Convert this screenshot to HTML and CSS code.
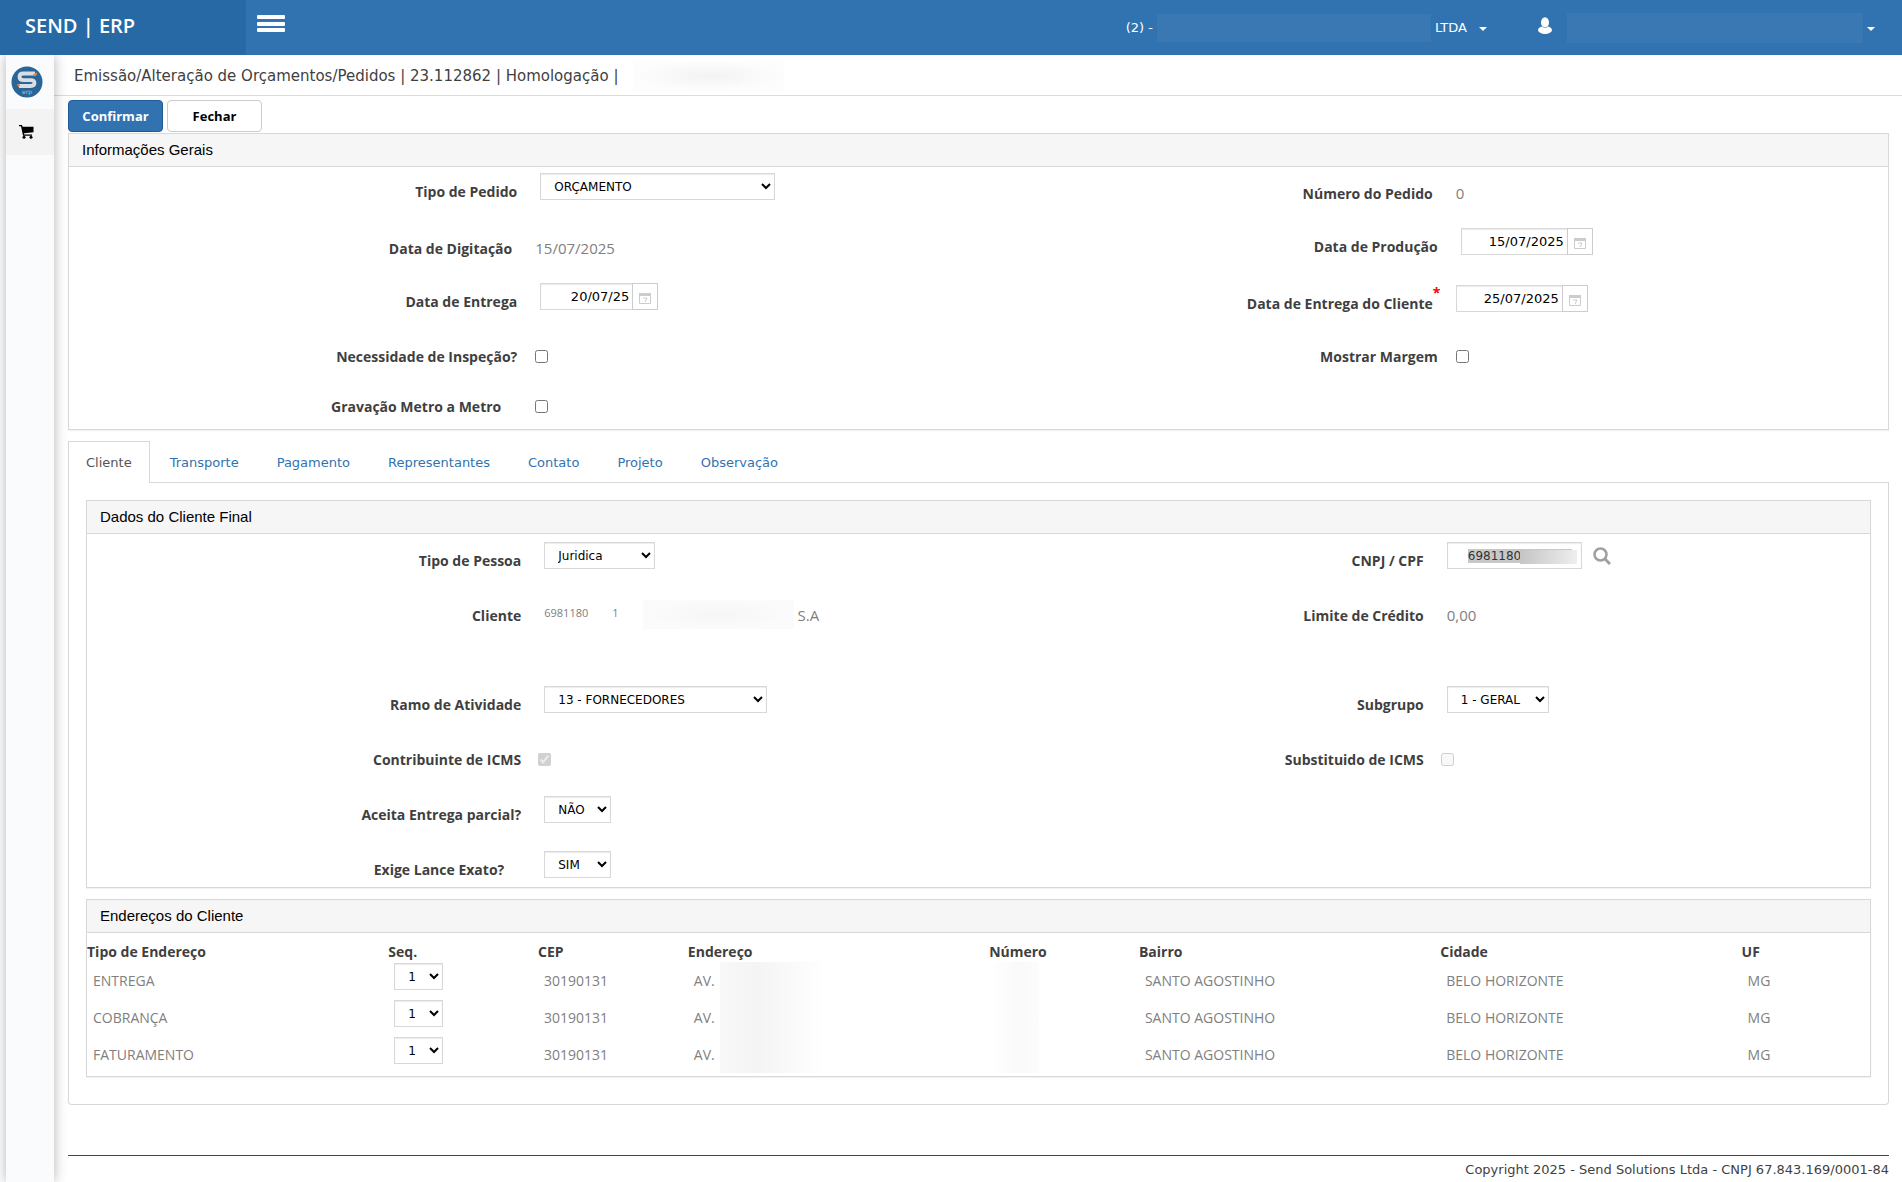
FILE: index.html
```html
<!DOCTYPE html>
<html lang="pt-BR">
<head>
  <meta charset="UTF-8">
  <meta name="viewport" content="width=device-width, initial-scale=1.0">
  <title>SEND | ERP</title>
  <link rel="stylesheet" href="styles.css">
</head>
<body>
  <header class="topbar">
    <a href="#" class="brand">SEND | ERP</a>
    <button type="button" class="menu-toggle" aria-label="Menu">
      <svg width="28" height="18" viewBox="0 0 28 18" fill="#fff">
        <rect width="28" height="4" rx="1"/>
        <rect y="7" width="28" height="4" rx="1"/>
        <rect y="13" width="28" height="4" rx="1"/>
      </svg>
    </button>
    <nav class="top-menu">
      <a href="#" class="top-link">(2) - <span class="masked masked-company"></span>LTDA <span class="caret"></span></a>
      <a href="#" class="top-link user-link" aria-label="Usuário">
        <svg width="16" height="18" viewBox="0 0 16 18" fill="#fff">
          <ellipse cx="8" cy="5.5" rx="4" ry="5.2"/>
          <ellipse cx="8" cy="13" rx="7" ry="4"/>
          <path d="M5 9.500q3 2.500 6 0" fill="none" stroke="#8fb3d4"/>
        </svg>
        <span class="masked masked-user"></span><span class="caret"></span>
      </a>
    </nav>
  </header>

  <div class="layout">
    <aside class="sidebar">
      <a href="#" class="side-logo" aria-label="Send ERP">
        <svg width="32" height="32" viewBox="0 0 32 32">
          <circle cx="16" cy="16" r="15.500" fill="#2a6598"/>
          <path d="M24 7.500H12.500Q8.500 7.500 8.500 10.800t4 3.300h7Q23.500 14.100 23.500 17t-4 3H8" fill="none" stroke="#d9dee5" stroke-width="3.800" stroke-linejoin="round"/>
          <path d="M22.500 8.500l3-1.500-.5 2.500zM6.500 18.500l2.500.5-1.500 1.500z" fill="#f08538" stroke="#f08538"/>
          <text x="16" y="27.500" class="logo-text">erp</text>
        </svg>
      </a>
      <a href="#" class="side-item" aria-label="Pedidos">
        <svg width="15" height="14" viewBox="0 0 15 14">
          <path d="M0 0h3l.6 1.800H14.500v5.400L5 8.300l.3 1.200H13v1.300H4L2 1.300H0z"/>
          <circle cx="5" cy="12.200" r="1.500"/>
          <circle cx="12" cy="12.200" r="1.500"/>
        </svg>
      </a>
    </aside>

    <main class="content">
      <h1 class="page-title">Emissão/Alteração de Orçamentos/Pedidos | 23.112862 | Homologação | <span class="masked masked-title"></span></h1>

      <form class="page-body">
        <div class="actions">
          <button type="button" class="btn btn-primary">Confirmar</button>
          <button type="button" class="btn">Fechar</button>
        </div>

        <section class="panel">
          <h2 class="panel-heading">Informações Gerais</h2>
          <div class="fields fields-general">
            <div class="field">
              <label for="tipo-pedido">Tipo de Pedido</label>
              <div class="control"><select id="tipo-pedido" class="input w-type"><option>ORÇAMENTO</option></select></div>
            </div>
            <div class="field field-tight">
              <span class="label">Número do Pedido</span>
              <div class="control"><span class="value">0</span></div>
            </div>

            <div class="field field-tight">
              <span class="label">Data de Digitação</span>
              <div class="control"><span class="value">15/07/2025</span></div>
            </div>
            <div class="field">
              <label for="data-producao">Data de Produção</label>
              <div class="control">
                <input id="data-producao" type="text" class="input date-input" value="15/07/2025">
                <button type="button" class="date-btn" aria-label="Calendário"><svg width="12" height="12" viewBox="0 0 12 12"><path d="M.5 2.500h11v9H.5z" fill="#fff" stroke="#ccc"/><path d="M0 1h12v3H0z" fill="#ccc"/><path d="M4 6h4L6 10" fill="none" stroke="#ccc"/></svg></button>
              </div>
            </div>

            <div class="field">
              <label for="data-entrega">Data de Entrega</label>
              <div class="control">
                <input id="data-entrega" type="text" class="input date-input date-short" value="20/07/25">
                <button type="button" class="date-btn" aria-label="Calendário"><svg width="12" height="12" viewBox="0 0 12 12"><path d="M.5 2.500h11v9H.5z" fill="#fff" stroke="#ccc"/><path d="M0 1h12v3H0z" fill="#ccc"/><path d="M4 6h4L6 10" fill="none" stroke="#ccc"/></svg></button>
              </div>
            </div>
            <div class="field field-tight">
              <label for="data-cliente">Data de Entrega do Cliente<span class="required">*</span></label>
              <div class="control">
                <input id="data-cliente" type="text" class="input date-input" value="25/07/2025">
                <button type="button" class="date-btn" aria-label="Calendário"><svg width="12" height="12" viewBox="0 0 12 12"><path d="M.5 2.500h11v9H.5z" fill="#fff" stroke="#ccc"/><path d="M0 1h12v3H0z" fill="#ccc"/><path d="M4 6h4L6 10" fill="none" stroke="#ccc"/></svg></button>
              </div>
            </div>

            <div class="field field-check">
              <label for="inspecao">Necessidade de Inspeção?</label>
              <div class="control"><input id="inspecao" type="checkbox"></div>
            </div>
            <div class="field field-check">
              <label for="margem">Mostrar Margem</label>
              <div class="control"><input id="margem" type="checkbox"></div>
            </div>

            <div class="field field-check field-short">
              <label for="gravacao">Gravação Metro a Metro</label>
              <div class="control"><input id="gravacao" type="checkbox"></div>
            </div>
          </div>
        </section>

        <nav class="tabs">
          <a href="#" class="tab active">Cliente</a>
          <a href="#" class="tab">Transporte</a>
          <a href="#" class="tab">Pagamento</a>
          <a href="#" class="tab">Representantes</a>
          <a href="#" class="tab">Contato</a>
          <a href="#" class="tab">Projeto</a>
          <a href="#" class="tab">Observação</a>
        </nav>

        <div class="tab-pane">
          <section class="panel">
            <h2 class="panel-heading">Dados do Cliente Final</h2>
            <div class="fields fields-client">
              <div class="field">
                <label for="tipo-pessoa">Tipo de Pessoa</label>
                <div class="control"><select id="tipo-pessoa" class="input w-person"><option>Juridica</option></select></div>
              </div>
              <div class="field">
                <label for="cnpj">CNPJ / CPF</label>
                <div class="control">
                  <span class="masked-input">
                    <input id="cnpj" type="text" class="input w-cnpj" value="6981180">
                    <span class="cnpj-mask"></span>
                  </span>
                  <button type="button" class="search-btn" aria-label="Pesquisar"><svg width="18" height="18" viewBox="0 0 18 18" fill="none" stroke="#a19fa3" stroke-width="2.500"><circle cx="7.500" cy="7.500" r="6"/><path d="M12 12l5 5" stroke-width="3"/></svg></button>
                </div>
              </div>

              <div class="field">
                <span class="label">Cliente</span>
                <div class="control">
                  <span class="code">6981180</span>
                  <span class="code">1</span>
                  <span class="masked masked-client"></span>
                  <span class="value">S.A</span>
                </div>
              </div>
              <div class="field">
                <span class="label">Limite de Crédito</span>
                <div class="control"><span class="value">0,00</span></div>
              </div>

              <div class="field">
                <label for="ramo">Ramo de Atividade</label>
                <div class="control"><select id="ramo" class="input w-branch"><option>13 - FORNECEDORES</option></select></div>
              </div>
              <div class="field">
                <label for="subgrupo">Subgrupo</label>
                <div class="control"><select id="subgrupo" class="input w-group"><option>1 - GERAL</option></select></div>
              </div>

              <div class="field field-check">
                <label for="contribuinte">Contribuinte de ICMS</label>
                <div class="control"><input id="contribuinte" type="checkbox" checked disabled></div>
              </div>
              <div class="field field-check">
                <label for="substituido">Substituido de ICMS</label>
                <div class="control"><input id="substituido" type="checkbox" disabled></div>
              </div>

              <div class="field field-left">
                <label for="parcial">Aceita Entrega parcial?</label>
                <div class="control"><select id="parcial" class="input w-flag"><option>NÃO</option><option>SIM</option></select></div>
              </div>

              <div class="field field-left field-short">
                <label for="lance">Exige Lance Exato?</label>
                <div class="control"><select id="lance" class="input w-flag"><option>SIM</option><option>NÃO</option></select></div>
              </div>
            </div>
          </section>

          <section class="panel">
            <h2 class="panel-heading">Endereços do Cliente</h2>
            <div class="address-wrap">
              <table class="addresses">
                <thead>
                  <tr>
                    <th class="col-wide">Tipo de Endereço</th>
                    <th class="col-narrow">Seq.</th>
                    <th class="col-narrow">CEP</th>
                    <th class="col-wide">Endereço</th>
                    <th class="col-narrow">Número</th>
                    <th class="col-wide">Bairro</th>
                    <th class="col-wide">Cidade</th>
                    <th>UF</th>
                  </tr>
                </thead>
                <tbody>
                  <tr>
                    <td>ENTREGA</td>
                    <td><select class="input w-seq" aria-label="Seq. entrega"><option>1</option></select></td>
                    <td>30190131</td>
                    <td class="masked-street">AV.</td>
                    <td class="masked-number"></td>
                    <td>SANTO AGOSTINHO</td>
                    <td>BELO HORIZONTE</td>
                    <td>MG</td>
                  </tr>
                  <tr>
                    <td>COBRANÇA</td>
                    <td><select class="input w-seq" aria-label="Seq. cobrança"><option>1</option></select></td>
                    <td>30190131</td>
                    <td class="masked-street">AV.</td>
                    <td class="masked-number"></td>
                    <td>SANTO AGOSTINHO</td>
                    <td>BELO HORIZONTE</td>
                    <td>MG</td>
                  </tr>
                  <tr>
                    <td>FATURAMENTO</td>
                    <td><select class="input w-seq" aria-label="Seq. faturamento"><option>1</option></select></td>
                    <td>30190131</td>
                    <td class="masked-street">AV.</td>
                    <td class="masked-number"></td>
                    <td>SANTO AGOSTINHO</td>
                    <td>BELO HORIZONTE</td>
                    <td>MG</td>
                  </tr>
                </tbody>
              </table>
            </div>
          </section>
        </div>
      </form>

      <footer class="footer">Copyright 2025 - Send Solutions Ltda - CNPJ 67.843.169/0001-84</footer>
    </main>
  </div>

</body>
</html>
```
FILE: styles.css
```css
:root {
  --primary: #3173b0;
  --primary-dark: #2769a5;
  --border: #d8d8d8;
  --text: #3f3f3f;
  --muted: #808080;
  --label-font: "Open Sans", "Noto Sans", sans-serif;
  --ui-font: Verdana, "DejaVu Sans", sans-serif;
}

* {
  box-sizing: border-box;
}

body {
  margin: 0;
  min-height: 100vh;
  display: flex;
  flex-direction: column;
  background: #fff;
  color: var(--text);
  font-family: var(--ui-font);
  font-size: 13px;
}

a {
  color: var(--primary);
  text-decoration: none;
}

button {
  cursor: pointer;
}

/* Topbar */
.topbar {
  display: flex;
  height: 55px;
  background: var(--primary);
}

.brand {
  width: 246px;
  padding-left: 25px;
  background: var(--primary-dark);
  color: #fff;
  font-family: var(--label-font);
  font-size: 20px;
  font-weight: 600;
  line-height: 51px;
}

.menu-toggle {
  align-self: flex-start;
  margin: 15px 0 0 11px;
  padding: 0;
  border: 0;
  background: none;
}

.menu-toggle svg {
  display: block;
}

.top-menu {
  display: flex;
  gap: 50px;
  margin-left: auto;
  padding-right: 27px;
}

.top-link {
  display: flex;
  align-items: center;
  gap: 4px;
  color: #fff;
}

.user-link svg {
  margin: 0 10px 4px 0;
}

.caret {
  margin: 2px 0 0 8px;
  border: 4px solid transparent;
  border-top-color: #fff;
  border-bottom: 0;
}

.masked {
  display: inline-block;
  background: #f9f9f9;
}

.masked-company {
  width: 274px;
  height: 28px;
  background: #3a78b3;
}

.masked-user {
  width: 296px;
  height: 30px;
  background: #3a78b3;
}

.user-link .caret {
  margin-left: 0;
}

/* Layout */
.layout {
  flex: 1;
  display: flex;
}

.sidebar {
  width: 48px;
  margin-left: 6px;
  background: #f9fbfd;
  box-shadow: 0 0 12px rgba(0, 0, 0, 0.3);
  clip-path: inset(0 -14px 0 -6px);
}

.side-logo,
.side-item {
  display: flex;
  align-items: center;
  justify-content: center;
}

.side-logo {
  height: 54px;
  padding-right: 6px;
}

.logo-text {
  fill: #a9c0d6;
  font-size: 6px;
  text-anchor: middle;
}

.side-item {
  height: 46px;
  padding-right: 8px;
  background: #f3f3f3;
}

.content {
  flex: 1;
  min-width: 0;
  display: flex;
  flex-direction: column;
}

.page-title {
  display: flex;
  align-items: center;
  gap: 16px;
  height: 41px;
  margin: 0;
  padding: 2px 0 0 20px;
  border-bottom: 1px solid #dcdcdc;
  font-size: 15px;
  font-weight: normal;
}

.masked-title {
  width: 150px;
  height: 30px;
  background: radial-gradient(closest-side, #f3f3f3, #fdfdfd);
}

.page-body {
  padding: 4px 13px 0 14px;
}

.actions {
  display: flex;
  gap: 4px;
}

.btn {
  width: 95px;
  height: 32px;
  margin-bottom: 1px;
  border: 1px solid #ccc;
  border-radius: 4px;
  background: #fff;
  color: #000;
  font-family: var(--label-font);
  font-size: 13px;
  font-weight: bold;
}

.btn-primary {
  border-color: #1f5c96;
  background: var(--primary);
  color: #fff;
}

/* Panels */
.panel {
  border: 1px solid var(--border);
  box-shadow: 0 1px 1px rgba(0, 0, 0, 0.05);
}

.panel + .panel {
  margin-top: 11px;
}

.panel-heading {
  height: 33px;
  margin: 0;
  padding-left: 13px;
  border-bottom: 1px solid var(--border);
  background: #f6f6f6;
  color: #000;
  font: 15px/32px "Liberation Sans", Arial, sans-serif;
}

.fields {
  display: grid;
  grid-template-columns: 1fr 1fr;
  column-gap: 22px;
  padding-top: 6px;
}

.fields-general {
  grid-template-rows: 55px 55px 55px 50px 41px;
}

.fields-client {
  grid-template-rows: 55px 89px 55px 55px 55px 36px;
  padding-top: 8px;
}

.field {
  display: flex;
}

.field-left {
  grid-column: 1;
}

.field label,
.field .label {
  width: 50%;
  padding-top: 9px;
  padding-right: 1px;
  text-align: right;
  font: bold 14px/20px var(--label-font);
}

.control {
  display: flex;
  align-items: flex-start;
  padding-left: 22px;
}

.field-tight {
  padding-top: 2px;
}

.field-tight label,
.field-tight .label {
  padding-right: 6px;
}

.field-tight .control,
.field-check .control {
  padding-left: 17px;
}

.field-short label {
  padding-right: 17px;
}

.fields-client label,
.fields-client .label {
  padding-right: 6px;
}

.fields-client .control {
  padding-left: 17px;
}

.fields-client .field-check .control {
  padding-left: 11px;
}

.fields-client .field-short label {
  padding-right: 23px;
}

.control input[type="checkbox"] {
  margin: 12px 0 0;
}

.value {
  padding-top: 8px;
  color: var(--muted);
  font: 15px/20px var(--label-font);
}

.code {
  margin-right: 24px;
  padding-top: 6px;
  color: var(--muted);
  font: 11px/20px var(--label-font);
}

.required {
  float: right;
  width: 0;
  margin-top: -11px;
  color: #f00;
}

.input {
  height: 27px;
  padding: 0 3px 0 9px;
  border: 1px solid var(--border);
  border-radius: 0;
  background-color: #fff;
  box-shadow: inset 0 1px 1px rgba(0, 0, 0, 0.08);
  color: #000;
  font-family: var(--ui-font);
  font-size: 12px;
}

.w-type { width: 235px; }
.w-person { width: 111px; }
.w-branch { width: 223px; }
.w-group { width: 102px; }
.w-flag { width: 67px; }
.w-seq { width: 49px; }

.w-cnpj {
  width: 135px;
  padding-left: 20px;
  background: linear-gradient(#c8c8c8, #c8c8c8) 20px 6px / 104px 14px no-repeat #fff;
  color: #333;
}

.date-input {
  width: 107px;
  font-size: 13px;
  text-align: right;
}

.date-short {
  width: 93px;
}

.date-btn {
  width: 26px;
  height: 27px;
  margin-left: -1px;
  padding: 5px 0 0;
  border: 1px solid #ccc;
  background: #fff;
}

.masked-input {
  position: relative;
}

/* covers the last digits of the document number */
.cnpj-mask {
  position: absolute;
  top: 8px;
  left: 73px;
  width: 57px;
  height: 14px;
  background: linear-gradient(100deg, #c4c4c4, #efefef);
}

.search-btn {
  margin: 5px 0 0 11px;
  padding: 0;
  border: 0;
  background: none;
}

.masked-client {
  width: 151px;
  height: 29px;
  margin: 3px 4px 0 0;
  background: radial-gradient(closest-side, #f6f6f6, #fbfbfb);
}

/* Tabs */
.tabs {
  display: flex;
  gap: 2px;
  margin-top: 11px;
  border-bottom: 1px solid var(--border);
}

.tab {
  height: 41px;
  padding: 0 17px;
  border: 1px solid transparent;
  border-bottom: 0;
  line-height: 42px;
}

.tab.active {
  margin-bottom: -1px;
  height: 42px;
  border-color: var(--border);
  background: #fff;
  color: #555;
}

.tab-pane {
  padding: 17px 17px 27px;
  border: 1px solid var(--border);
  border-top: 0;
  border-radius: 0 0 4px 4px;
}

/* Addresses */
.address-wrap {
  padding: 9px 0 3px;
}

.addresses {
  width: 100%;
  table-layout: fixed;
  border-collapse: collapse;
  font: 14px/20px var(--label-font);
}

.addresses th {
  padding: 0;
  text-align: left;
}

.addresses td {
  height: 37px;
  padding: 0 0 0 6px;
  color: var(--muted);
  vertical-align: middle;
}

.addresses .input {
  display: block;
  margin-bottom: 8px;
}

.col-wide { width: 16.9%; }
.col-narrow { width: 8.4%; }

.masked-street {
  background: linear-gradient(90deg, #f8f8f8, #f4f4f4 35%, #fff) 32px 0 / 105px 100% no-repeat;
}

.masked-number {
  background: linear-gradient(90deg, #fff, #f9f9f9 60%, #fcfcfc) 0 0 / 50px 100% no-repeat;
}

.footer {
  margin: 50px 13px 0 14px;
  padding-top: 6px;
  border-top: 1px solid #444;
  text-align: right;
  line-height: 16px;
}
```
